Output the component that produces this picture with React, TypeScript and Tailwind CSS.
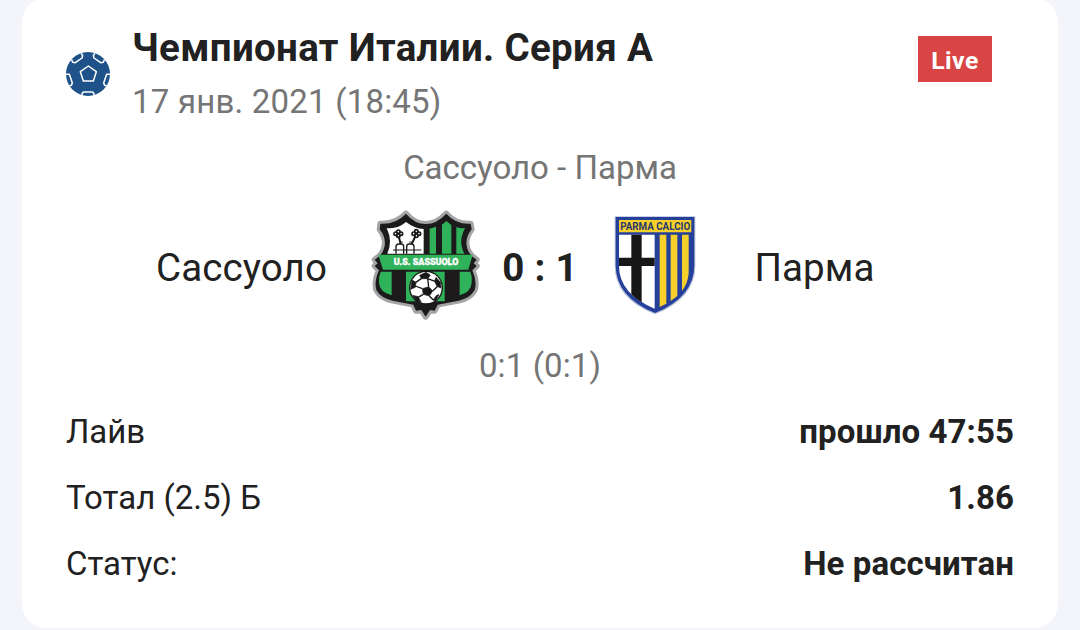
function BallIcon() {
  return (
    <svg viewBox="0 0 192 192" className="w-16 h-16 shrink-0" fill="none">
      <defs>
        <clipPath id="ball">
          <circle cx="96" cy="102" r="66" />
        </clipPath>
      </defs>
      <circle cx="96" cy="102" r="66" fill="#20528a" />
      <g stroke="#fff" strokeWidth="4.5" strokeLinejoin="round" clipPath="url(#ball)">
        <path d="M97 78l24 17-9 28H82l-9-28z" />
        <path d="M46 57l4 10 8 1 20-14 2-7-5-8" />
        <path d="M146 57l-4 10-8 1-20-14-2-7 5-8" />
        <path d="M28 103h12l9 26-3 7-14 4" />
        <path d="M164 103h-12l-9 26 3 7 14 4" />
        <path d="M78 172v-11l4-5h28l4 5v11" />
      </g>
    </svg>
  );
}

function SassuoloCrest() {
  return (
    <svg viewBox="0 0 390 390" className="w-[130px] h-[130px] shrink-0">
      <defs>
        <path
          id="sas-shape"
          d="M61 71Q107 74 138 41Q164 72 197 72Q230 72 259 41Q288 74 332 71L335 88Q316 112 320 137Q324 158 338 170L350 179L341 190L350 198L337 211Q352 244 344 270Q331 294 296 302L233 314L224 332L210 330L197 350L184 330L168 332L160 314L98 302Q62 294 49 270Q42 244 57 211L44 198L53 190L44 179L56 170Q70 158 74 137Q78 112 59 88Z"
        />
      </defs>
      <use href="#sas-shape" fill="#a3a5a7" stroke="#a3a5a7" strokeWidth="18" strokeLinejoin="round" />
      <use href="#sas-shape" fill="#1c1a1b" />
      <path d="M80 84Q112 88 138 66Q164 86 191 87V161H82Q99 124 80 84Z" fill="#fff" />
      <path d="M209 86L228 80V161H209ZM246 74L259 63L274 75V161H246ZM289 81Q302 86 315 84Q301 111 304 134Q307 150 313 161H289Z" fill="#30b25a" />
      <path d="M55 164H338L325 209H69Z" fill="#30b25a" />
      <path d="M62 215H95V286Q59 276 57 248Q55 232 62 215ZM138 215H254V304H138ZM299 215H331Q338 232 335 248Q333 276 299 286Z" fill="#30b25a" />
      <g fill="none" stroke="#171717" strokeWidth="4">
        <path d="M116 109L122 132M166 109L155 132" strokeWidth="6" />
        <path d="M108 161V141Q108 132 116 132H124Q131 132 131 141V161M140 161V141Q140 132 147 132H154Q162 132 162 141V161" />
        <path d="M99 150H184M121 126H128M148 126H155" strokeWidth="3" />
      </g>
      <g fill="none" stroke="#171717" strokeWidth="5">
        <circle cx="107" cy="101" r="5" />
        <circle cx="115" cy="95" r="5" />
        <circle cx="123" cy="101" r="5" />
        <circle cx="115" cy="107" r="5" />
        <circle cx="161" cy="101" r="5" />
        <circle cx="169" cy="94" r="5" />
        <circle cx="177" cy="101" r="5" />
        <circle cx="169" cy="107" r="5" />
      </g>
      <text
        x="198"
        y="196"
        textAnchor="middle"
        textLength="194"
        lengthAdjust="spacingAndGlyphs"
        fill="#fff"
        stroke="#fff"
        strokeWidth="1"
        fontSize="28"
        fontWeight="900"
      >
        U.S. SASSUOLO
      </text>
      <circle cx="198" cy="263" r="51" fill="#171717" />
      <circle cx="198" cy="263" r="47" fill="#fff" />
      <g fill="#171717" stroke="#171717" strokeWidth="2" strokeLinejoin="round">
        <path d="M187 266L206 260L218 273L208 288L190 283Z" />
        <path d="M179 226L198 217L211 225L203 236L184 236Z" />
        <path d="M228 232L241 247L243 264L231 259L224 244Z" />
        <path d="M156 240L168 247L166 262L152 268Z" />
        <path d="M158 286L174 290L184 307L169 302Z" />
        <path d="M219 300L230 286L237 284L226 302Z" />
        <path
          d="M187 266L166 258M206 260L203 236M218 273L233 259M208 288L220 300M190 283L174 292M184 236L167 247M203 236L225 244"
          strokeWidth="4"
        />
      </g>
    </svg>
  );
}

function ParmaCrest() {
  return (
    <svg viewBox="0 0 300 360" className="w-[100px] h-[120px] shrink-0 overflow-visible">
      <path d="M29 34H271V182Q271 280 150 328Q29 280 29 182Z" fill="#b9bfd8" />
      <path d="M32 36H268V182Q267 276 150 324Q33 276 32 182Z" fill="#24409a" />
      <path d="M42 45H259V82H42Z" fill="#f7d02c" />
      <path d="M42 89H149V311Q42 266 42 182Z" fill="#fff" />
      <path d="M79 89H110V292Q93 282 79 268ZM42 158H149V183H42Z" fill="#171717" />
      <path d="M164 89H184V296L164 306ZM197 89H217V273L197 288ZM231 89H251V205Q249 234 231 258Z" fill="#f7d02c" />
      <text
        transform="translate(150.5 76) scale(0.84 1)"
        textAnchor="middle"
        fill="#28376b"
        fontSize="35"
        fontWeight="700"
      >
        PARMA CALCIO
      </text>
    </svg>
  );
}

const rows = [
  { label: "Лайв", value: "прошло 47:55" },
  { label: "Тотал (2.5) Б", value: "1.86" },
  { label: "Статус:", value: "Не рассчитан" },
];

export default function App() {
  return (
    <div className="h-[630px] overflow-hidden bg-[#f3f5fb] px-[22px] font-[Roboto,sans-serif] text-[33px] leading-[38px] text-[#212121]">
      <div className="-mt-0.5 h-[630px] rounded-[24px] bg-white px-11 pt-[26px]">
        {/* League */}
        <header className="flex items-start">
          <div className="-ml-2.5 mt-4">
            <BallIcon />
          </div>
          <div className="ml-3 flex-1">
            <h1 className="pt-px text-[38.5px] leading-[46px] font-bold tracking-[0.33px] whitespace-nowrap">
              Чемпионат Италии. Серия А
            </h1>
            <p className="mt-3 tracking-[0.2px] text-[#757575]">17 янв. 2021 (18:45)</p>
          </div>
          <span className="mr-[22px] mt-3 flex h-[46px] w-[74px] items-center justify-center bg-[#d94545] pt-[3px] text-[24.75px] font-bold tracking-[0.5px] text-white">
            Live
          </span>
        </header>

        {/* Match */}
        <p className="mt-7 text-center text-[#757575]">Сассуоло - Парма</p>
        <div className="mt-3 flex h-[132px] items-center text-[38.5px]">
          <span className="ml-[70px] w-[211px] pt-[5px] text-center tracking-[0.1px]">Сассуоло</span>
          <div className="ml-[13px]">
            <SassuoloCrest />
          </div>
          <span className="w-[100px] pt-[5px] text-center font-bold tracking-[0.3px]">0 : 1</span>
          <div className="ml-[15px]">
            <ParmaCrest />
          </div>
          <span className="w-[219px] pt-[5px] text-center tracking-[0.1px]">Парма</span>
        </div>
        <p className="mt-4 text-center tracking-[0.1px] text-[#757575]">0:1 (0:1)</p>

        {/* Bet details */}
        <dl className="mt-7 space-y-7">
          {rows.map((row) => (
            <div key={row.label} className="flex justify-between">
              <dt>{row.label}</dt>
              <dd className="font-bold tracking-[0.08px]">{row.value}</dd>
            </div>
          ))}
        </dl>
      </div>
    </div>
  );
}
